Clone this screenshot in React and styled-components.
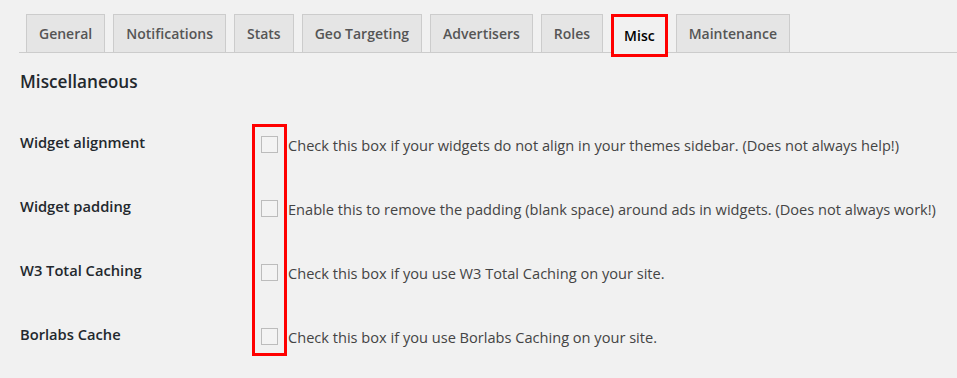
import React from "react";
import styled, { createGlobalStyle } from "styled-components";

const GlobalStyle = createGlobalStyle`
    html, body {
        margin: 0;
        padding: 0;
        background-color: #f1f1f1;
    }
    body {
        font-family: "Open Sans", "Noto Sans", sans-serif;
        color: #23282d;
    }
`;

const Page = styled.div`
    width: 957px;
    height: 378px;
    padding-left: 20px;
    box-sizing: border-box;
    overflow: hidden;
`;
const TabNav = styled.div`
    display: flex;
    align-items: flex-start;
    gap: 8px;
    height: 38px;
    padding: 14px 0 0 7px;
    margin-left: -1px;
    border-bottom: 1px solid #ccc;
`;
const Tab = styled.div`
    display: flex;
    align-items: center;
    box-sizing: border-box;
    height: ${(p) => (p.$active ? "43px" : "38px")};
    padding: 0 ${(p) => (p.$active ? "10px" : "12px")};
    border: ${(p) => (p.$active ? "3px solid #ff0000" : "1px solid #ccc")};
    border-bottom: ${(p) => (p.$active ? "3px solid #ff0000" : "none")};
    background-color: ${(p) => (p.$active ? "#f1f1f1" : "#e5e5e5")};
    color: ${(p) => (p.$active ? "#000" : "#555")};
    font-size: 14px;
    font-weight: 600;
    white-space: nowrap;
    position: relative;
    z-index: 1;
`;
const Heading = styled.h2`
    margin: 0;
    height: 58px;
    display: flex;
    align-items: center;
    padding-bottom: 2px;
    box-sizing: border-box;
    font-size: 17.2px;
    font-weight: 600;
    color: #23282d;
`;
const OptionsGrid = styled.div`
    display: grid;
    grid-template-columns: 232px 35px 1fr;
    grid-template-rows: repeat(4, 64px);
`;
const Label = styled.div`
    grid-column: 1;
    grid-row: ${(p) => p.$row};
    align-self: center;
    margin-bottom: 2px;
    font-size: 14.7px;
    font-weight: 600;
    color: #23282d;
`;
const Highlight = styled.div`
    grid-column: 2;
    grid-row: 1 / 5;
    margin: 13px 0 11px;
    border: 3px solid #ff0000;
`;
const Checkbox = styled.span`
    grid-column: 2;
    grid-row: ${(p) => p.$row};
    align-self: center;
    justify-self: start;
    width: 17px;
    height: 17px;
    margin: 2px 0 0 9px;
    box-sizing: border-box;
    border: 1px solid #bcbcbc;
    background-color: #f3f3f3;
`;
const Description = styled.div`
    grid-column: 3;
    grid-row: ${(p) => p.$row};
    align-self: center;
    margin: 3px 0 0 1px;
    font-size: 14.6px;
    color: #444;
    white-space: nowrap;
`;

const tabs = [
    "General",
    "Notifications",
    "Stats",
    "Geo Targeting",
    "Advertisers",
    "Roles",
    "Misc",
    "Maintenance",
];

const options = [
    {
        label: "Widget alignment",
        text: "Check this box if your widgets do not align in your themes sidebar. (Does not always help!)",
    },
    {
        label: "Widget padding",
        text: "Enable this to remove the padding (blank space) around ads in widgets. (Does not always work!)",
    },
    {
        label: "W3 Total Caching",
        text: "Check this box if you use W3 Total Caching on your site.",
    },
    {
        label: "Borlabs Cache",
        text: "Check this box if you use Borlabs Caching on your site.",
    },
];

const App = () => {
    return (
        <Page>
            <GlobalStyle />
            <TabNav>
                {tabs.map((t) => (
                    <Tab key={t} $active={t === "Misc"}>
                        {t}
                    </Tab>
                ))}
            </TabNav>
            <Heading>Miscellaneous</Heading>
            <OptionsGrid>
                <Highlight />
                {options.map((o, i) => (
                    <React.Fragment key={o.label}>
                        <Label $row={i + 1}>{o.label}</Label>
                        <Checkbox $row={i + 1} />
                        <Description $row={i + 1}>{o.text}</Description>
                    </React.Fragment>
                ))}
            </OptionsGrid>
        </Page>
    );
};

export default App;
